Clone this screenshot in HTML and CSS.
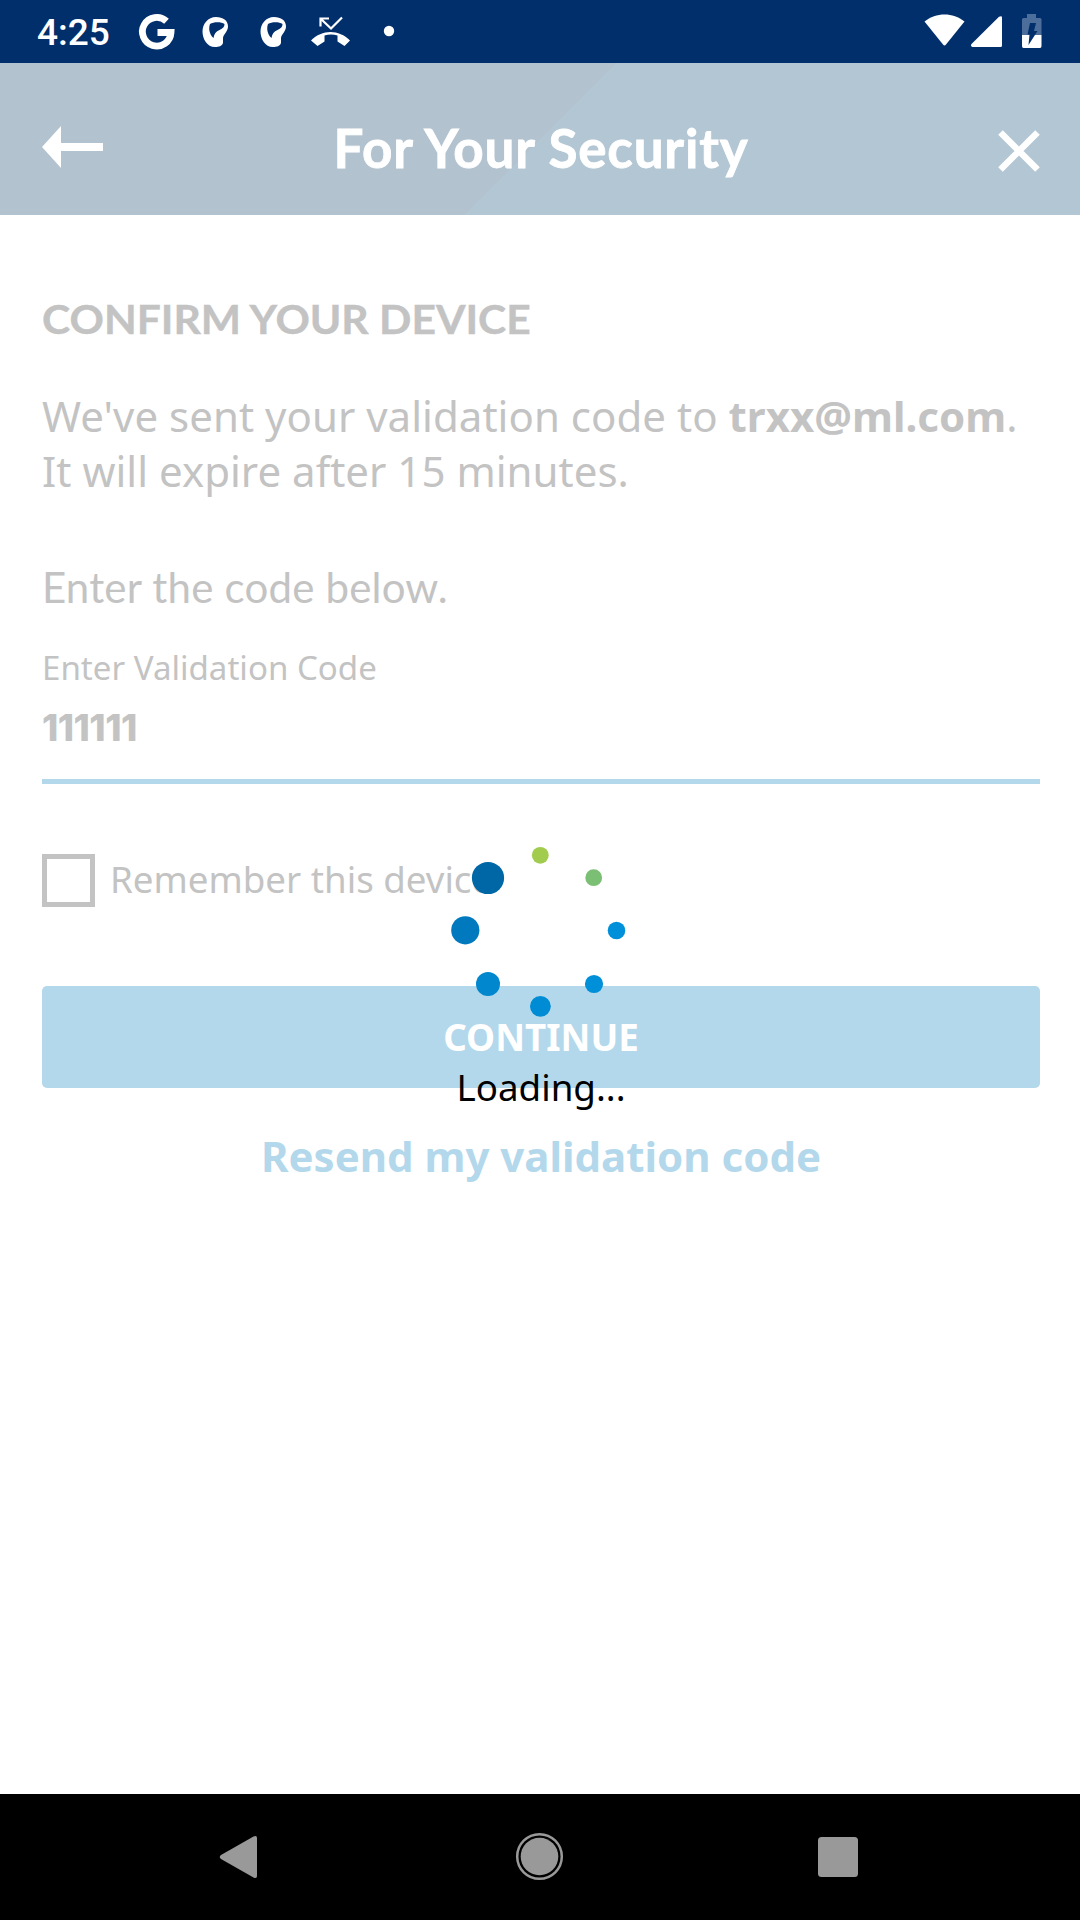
FILE: index.html
```html
<!DOCTYPE html>
<html lang="en">
<head>
<meta charset="utf-8">
<title>For Your Security</title>
<link rel="stylesheet" href="styles.css">
</head>
<body>
<div class="screen">
  <div class="status-bar">
    <span class="clock">4:25</span>
    <svg class="notifications" viewBox="130 0 280 63" aria-hidden="true">
      <path class="g-mark" d="M166.500 21.300A14.300 14.300 0 1 0 171 32.500H157.500"/>
      <g id="app-badge">
        <path fill="#fff" fill-rule="evenodd" d="M216 17c7 0 12 3.500 12 9.500 0 5-4.500 7.500-5 11.500v5c-1 3-4 4-8 4-8 0-12.500-8-12.500-15.500 0-7.500 5.500-14.500 13.500-14.500zM210 24c-1.500 4-1 10 3.500 14 .5-4 2.500-6.500 6-8 3.500-1.500 5-3 5-6-3-2.500-11-2.500-14.500 0z"/>
      </g>
      <use href="#app-badge" x="58"/>
      <path fill="none" stroke="#fff" stroke-width="2.200" d="M320.500 26.500V18.500H329M321 19l10 9.500 11-11"/>
      <path fill="#fff" d="M311 40.500c11-11.500 28-11.500 39 0l-5.500 5.500-7-4.500v-6c-4-1.500-9-1.500-13 0v6l-7 4.500z"/>
      <circle cx="389" cy="31" r="5.200" fill="#fff"/>
    </svg>
    <svg class="indicators" viewBox="920 0 130 63" aria-hidden="true">
      <path fill="#fff" d="M924.500 21.500C936 12 953 12 964.500 21.500L946 44.500q-1.500 1.800-3 0z"/>
      <path fill="#fff" d="M1002 17.500V45.500q0 1.500-1.500 1.500H972.500q-2.500-1-1-3L999 16.800q3-1.500 3 .7z"/>
      <path fill="#4d6e9b" d="M1027 14h9v4h4q1.500 0 1.500 1.500V35h-19.500V19.500q0-1.500 1.500-1.500h3.500z"/>
      <path fill="#fff" d="M1022 35h19.500v11q0 2-1.500 2h-16.500q-1.500 0-1.500-2z"/>
      <path fill="#002f6c" d="M1030 23h6l-2 8h3.500l-9 14 1-10.500h-2z"/>
    </svg>
  </div>

  <header class="app-header">
    <svg class="back" viewBox="0 0 62 42"><path fill="#fff" d="M0 21 19 0v17h42v8H19v17z"/></svg>
    <h1 class="title">For Your Security</h1>
    <svg class="close" viewBox="0 0 42 42"><path stroke="#fff" stroke-width="6.500" d="M2.500 2.500l37 37M39.500 2.500l-37 37"/></svg>
  </header>

  <main class="content">
    <h2 class="heading">CONFIRM YOUR DEVICE</h2>
    <p class="message">We've sent your validation code to <b>trxx@ml.com</b>.<br>It will expire after 15 minutes.</p>
    <p class="prompt">Enter the code below.</p>
    <div class="field">
      <div class="field-label">Enter Validation Code</div>
      <div class="field-value">111111</div>
    </div>
    <div class="remember"><span class="checkbox"></span><span class="remember-label">Remember this device</span></div>
    <div class="button">CONTINUE</div>
    <div class="resend">Resend my validation code</div>
  </main>

  <nav class="nav-bar">
    <svg class="nav-icons" viewBox="0 1794 1080 126" aria-hidden="true">
      <g fill="#999">
        <path d="M221 1855 253.500 1836.500q3.500-1.500 3.500 1.500v38q0 3-3.500 1.500L221 1859q-2.500-2 0-4z"/>
        <circle cx="539.500" cy="1856.500" r="18.800"/>
        <circle cx="539.500" cy="1856.500" r="22.300" fill="none" stroke="#999" stroke-width="2.500"/>
        <rect x="818" y="1837" width="40" height="40" rx="3.500"/>
      </g>
    </svg>
  </nav>

  <div class="loading">
    <svg class="spinner" viewBox="450 840 180 180" aria-hidden="true">
      <circle cx="540.300" cy="855.300" r="8.400" fill="#a1cc4e"/>
      <circle cx="593.700" cy="877.700" r="8.400" fill="#7abf73"/>
      <circle cx="616.500" cy="930.500" r="8.800" fill="#0090da"/>
      <circle cx="594" cy="984" r="9.100" fill="#008fd9"/>
      <circle cx="540.400" cy="1006.300" r="10.400" fill="#008cd5"/>
      <circle cx="488" cy="984" r="12" fill="#0087ce"/>
      <circle cx="465.300" cy="930.300" r="14.100" fill="#0079be"/>
      <circle cx="488" cy="878" r="16.100" fill="#0067a6"/>
    </svg>
    <div class="loading-text">Loading...</div>
  </div>
</div>
</body>
</html>
```
FILE: styles.css
```css
* { box-sizing: border-box; }
body { margin: 0; font-family: "Noto Sans", sans-serif; }
h1, h2, p { margin: 0; }
svg { display: block; }

.screen {
  position: relative;
  display: flex;
  flex-direction: column;
  width: 1080px;
  height: 1920px;
  overflow: hidden;
  background: #fff;
  white-space: nowrap;
}

.status-bar { display: flex; height: 63px; padding-left: 37px; background: #002f6c; }
.clock { width: 93px; color: #fff; font: 500 37px/66px Roboto, sans-serif; }
.notifications { width: 280px; height: 63px; }
.g-mark { fill: none; stroke: #fff; stroke-width: 6.800; }
.indicators { width: 130px; height: 63px; margin-left: 510px; }

.app-header {
  display: grid;
  grid-template-columns: 62px 1fr 62px;
  align-items: start;
  height: 152px;
  padding: 63px 40px 0 42px;
  background: linear-gradient(135deg, #b3c2cf 435.500px, #b3c6d3 436px);
}
.back { width: 62px; height: 42px; }
.title {
  margin-top: -10px;
  color: #fff;
  font: 700 53px/64px Lato, sans-serif;
  letter-spacing: 0.8px;
  text-align: center;
  -webkit-text-stroke: 0.8px #fff;
}
.close { justify-self: end; width: 42px; height: 42px; margin-top: 4px; }

.content { flex: 1; padding: 79px 40px 0 42px; color: #c3c3c3; }
.heading {
  font: 700 40px/50px Lato, sans-serif;
  transform: scaleX(1.064);
  transform-origin: left;
  -webkit-text-stroke: 0.4px #c3c3c3;
}
.message { margin-top: 44px; font-size: 42px; line-height: 55px; letter-spacing: 0.030px; }
.prompt { margin-top: 59px; font: 400 42px/60px Lato, sans-serif; letter-spacing: 0.200px; }
.field { height: 165px; margin-top: 2px; padding-top: 24px; border-bottom: 5px solid #b3d8eb; }
.field-label { font-size: 33.080px; line-height: 50px; }
.field-value { margin-top: 10px; font: 800 37px/50px Inter, sans-serif; letter-spacing: -0.550px; }
.remember { display: flex; align-items: center; height: 53px; margin-top: 70px; }
.checkbox { width: 53px; height: 53px; margin-right: 15px; border: 5px solid #c3c3c3; }
.remember-label { margin-top: -3px; font-size: 36.700px; }
.button {
  height: 102px;
  margin-top: 79px;
  border-radius: 5px;
  background: #b3d8eb;
  color: #fff;
  font-weight: 700;
  font-size: 36.750px;
  line-height: 102px;
  text-align: center;
}
.resend { margin-top: 38px; color: #b3d8eb; font-weight: 700; font-size: 42px; line-height: 60px; text-align: center; }

.nav-bar { height: 126px; background: #000; }
.nav-icons { width: 1080px; height: 126px; }

/* Progress overlay on top of the dimmed form */
.loading { position: absolute; left: 451px; top: 840px; width: 180px; }
.spinner { width: 180px; height: 180px; margin-left: -1px; }
.loading-text { margin-top: 42px; color: #000; font-size: 36.750px; line-height: 50px; text-align: center; }
```
